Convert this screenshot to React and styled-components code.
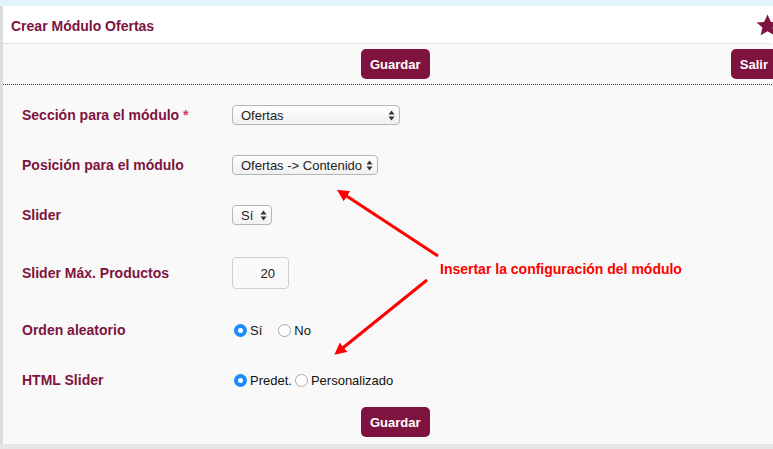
import React from "react";
import styled, { createGlobalStyle } from "styled-components";

const Global = createGlobalStyle`
html, body { margin: 0; padding: 0; overflow: hidden; background: #e6e6e6; }
body { font-family: "Liberation Sans", Arial, sans-serif; }
`;

const MAROON = "#7e1340";

export default function App() {
  return (
    <>
      <Global />
      <Page>
        <TopStrip />
        <Panel>
          <Header>
            <Title>Crear Módulo Ofertas</Title>
            <Star viewBox="0 0 24 24">
              <path d="M12 1.5l3.1 7 7.4.6-5.6 4.9 1.7 7.4L12 17.5l-6.6 3.9 1.7-7.4L1.5 9.1l7.4-.6z" fill={MAROON} />
            </Star>
          </Header>
          <Toolbar>
            <Button>Guardar</Button>
            <Button push>Salir</Button>
          </Toolbar>
          <Form>
            <Row h={50}>
              <Label>Sección para el módulo <Req>*</Req></Label>
              <Select w={168}>Ofertas</Select>
            </Row>
            <Row h={50}>
              <Label>Posición para el módulo</Label>
              <Select w={146}>Ofertas -&gt; Contenido</Select>
            </Row>
            <Row h={50}>
              <Label>Slider</Label>
              <Select w={40}>Sí</Select>
            </Row>
            <Row h={66}>
              <Label>Slider Máx. Productos</Label>
              <NumberInput>20</NumberInput>
            </Row>
            <Row h={48}>
              <Label>Orden aleatorio</Label>
              <Radios>
                <Radio checked />
                <RadioText>Sí</RadioText>
                <Radio gap={16} />
                <RadioText>No</RadioText>
              </Radios>
            </Row>
            <Row h={52}>
              <Label>HTML Slider</Label>
              <Radios>
                <Radio checked />
                <RadioText>Predet.</RadioText>
                <Radio gap={3} />
                <RadioText>Personalizado</RadioText>
              </Radios>
            </Row>
            <Footer>
              <Button>Guardar</Button>
            </Footer>
          </Form>
        </Panel>
        <Overlay>
          <svg width="773" height="449">
            <defs>
              <marker id="head" markerWidth="4" markerHeight="4" refX="2" refY="2" orient="auto">
                <path d="M0 0L4 2L0 4z" fill="#f00" />
              </marker>
            </defs>
            <line x1="438" y1="256" x2="342" y2="193" stroke="#f00" strokeWidth="3" markerEnd="url(#head)" />
            <line x1="427" y1="280" x2="339" y2="351" stroke="#f00" strokeWidth="3" markerEnd="url(#head)" />
          </svg>
          <Note>Insertar la configuración del módulo</Note>
        </Overlay>
      </Page>
    </>
  );
}

function Select(props) {
  return (
    <SelectBox w={props.w}>
      <span>{props.children}</span>
      <svg width="7" height="11" viewBox="0 0 7 11">
        <path d="M3.5 0.5L6.5 4.5H0.5z M3.5 10.5L6.5 6.5H0.5z" fill="#333" />
      </svg>
    </SelectBox>
  );
}

function Radio(props) {
  return <RadioDot checked={props.checked} gap={props.gap} />;
}

const Page = styled.div`
position: relative;
width: 780px;
height: 449px;
`;
const TopStrip = styled.div`
height: 6px;
background: #e1f4fb;
`;
const Panel = styled.div`
border-left: 3px solid #dcdcdc;
background: #f9f9f9;
height: 438px;
display: flex;
flex-direction: column;
`;
const Header = styled.div`
height: 37px;
background: #fff;
border-bottom: 1px dotted #c8c8c8;
display: flex;
align-items: center;
justify-content: space-between;
padding: 0 0 0 8px;
`;
const Title = styled.div`
color: ${MAROON};
font-size: 14px;
font-weight: bold;
margin-top: 3px;
`;
const Star = styled.svg`
width: 25px;
height: 25px;
margin-top: 2px;
`;
const Toolbar = styled.div`
height: 41px;
box-sizing: border-box;
border-bottom: 1px dotted ${MAROON};
display: flex;
align-items: flex-start;
padding: 5px 0 0 358px;
`;
const Button = styled.button`
background: ${MAROON};
color: #fff;
border: none;
border-radius: 5px;
height: 30px;
padding: 0 9px;
font-family: "Liberation Sans", Arial, sans-serif;
font-size: 13px;
font-weight: bold;
margin-left: ${props => props.push ? "auto" : "0"};
margin-right: ${props => props.push ? "-3px" : "0"};
${props => props.push ? "padding-right: 15px;" : ""}
`;
const Form = styled.div`
padding: 5px 0 0 19px;
display: flex;
flex-direction: column;
`;
const Row = styled.div`
height: ${props => props.h}px;
display: grid;
grid-template-columns: 210px auto;
align-items: center;
`;
const Label = styled.div`
color: ${MAROON};
font-size: 14px;
font-weight: bold;
`;
const Req = styled.span`
color: #e0315b;
`;
const SelectBox = styled.div`
width: ${props => props.w}px;
height: 20px;
box-sizing: border-box;
border: 1px solid #b5b5b5;
border-radius: 4px;
background: linear-gradient(#ffffff, #f1f1f1);
display: flex;
align-items: center;
justify-content: space-between;
padding: 0 4px 0 8px;
font-size: 13px;
color: #222;
`;
const NumberInput = styled.div`
width: 57px;
height: 32px;
box-sizing: border-box;
border: 1px solid #cfcfcf;
border-radius: 4px;
background: #f9f9f9;
display: flex;
align-items: center;
justify-content: flex-end;
padding-right: 13px;
font-size: 13px;
color: #222;
`;
const Radios = styled.div`
display: flex;
align-items: center;
padding-left: 2px;
font-size: 13px;
color: #111;
`;
const RadioDot = styled.span`
width: 13px;
height: 13px;
box-sizing: border-box;
border-radius: 50%;
margin-left: ${props => props.gap || 0}px;
margin-right: 3px;
background: ${props => props.checked ? "#1a8cff" : "#fff"};
border: ${props => props.checked ? "none" : "1px solid #a8a8a8"};
display: flex;
align-items: center;
justify-content: center;
&::after {
  content: "";
  width: 5px;
  height: 5px;
  border-radius: 50%;
  background: #fff;
  display: ${props => props.checked ? "block" : "none"};
}
`;
const RadioText = styled.span``;
const Footer = styled.div`
display: flex;
padding: 1px 0 0 339px;
`;
const Overlay = styled.div`
position: absolute;
inset: 0;
pointer-events: none;
`;
const Note = styled.div`
position: absolute;
left: 440px;
top: 261px;
color: #f00;
font-size: 14px;
font-weight: bold;
`;
